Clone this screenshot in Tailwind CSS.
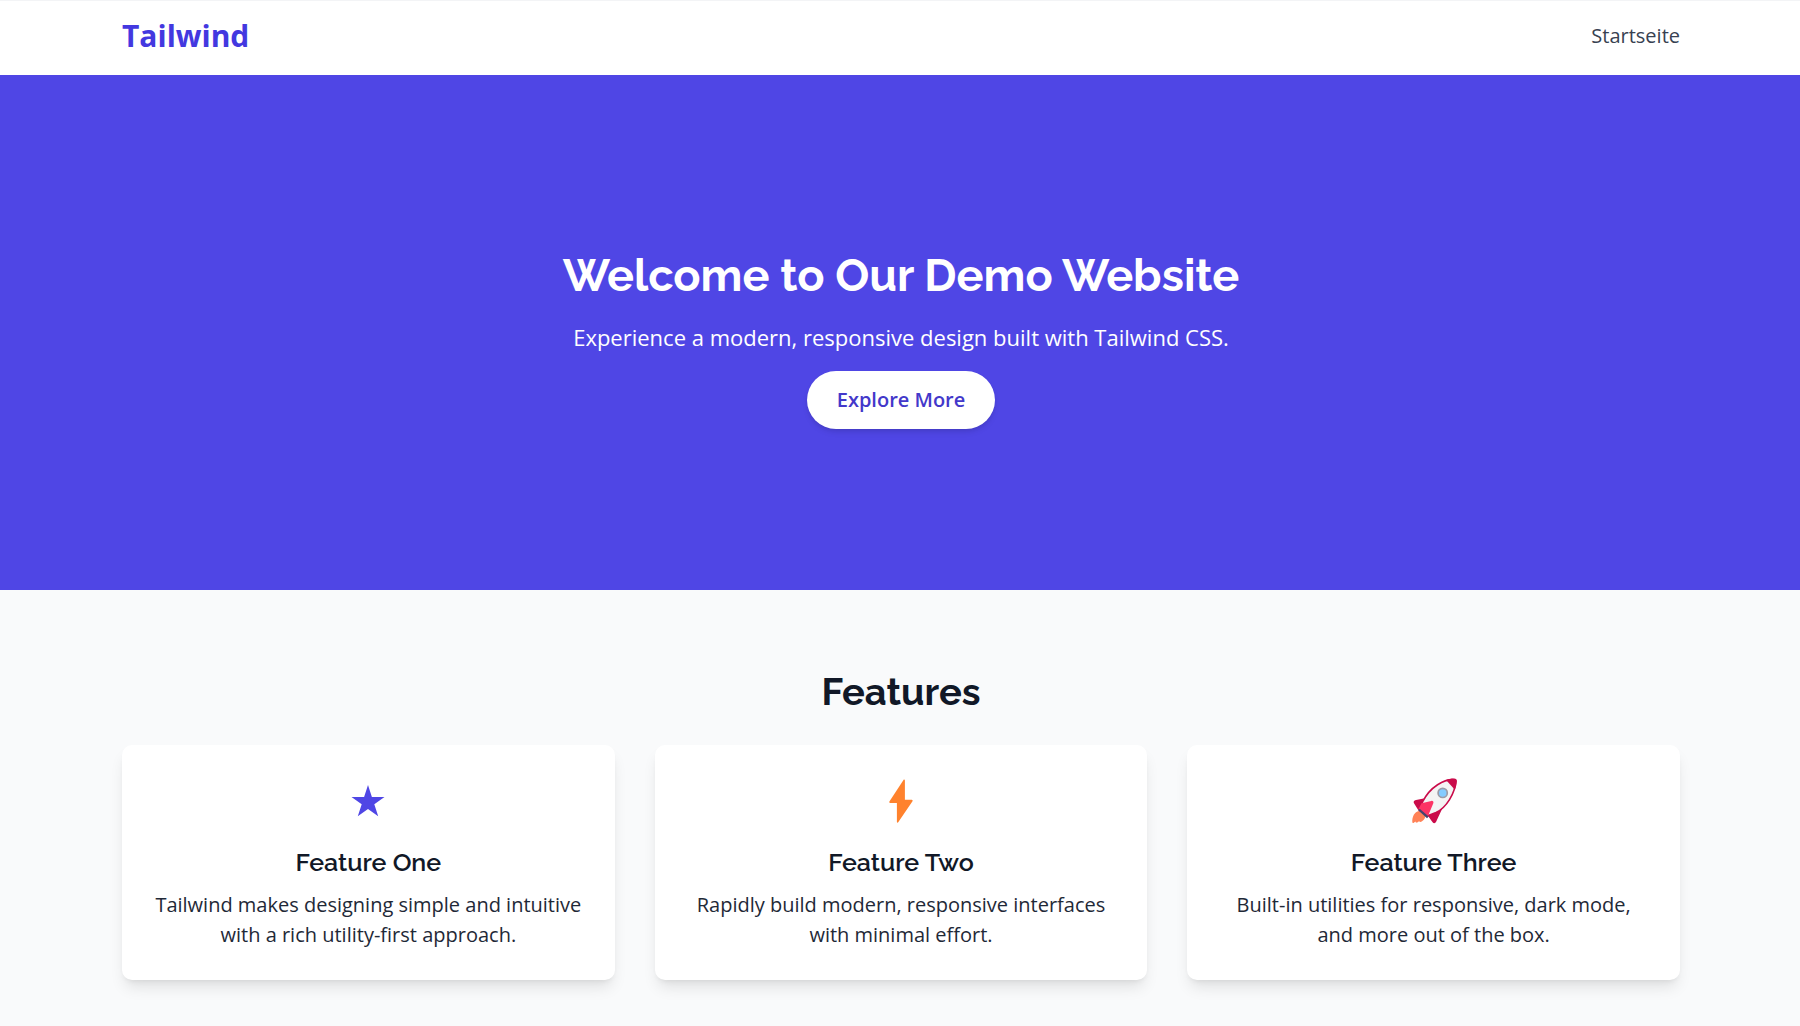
<!DOCTYPE html>
<html lang="de">

<head>
    <meta charset="UTF-8">
    <meta name="viewport" content="width=device-width, initial-scale=1.0">
    <title>Tailwind</title>
    <script src="https://cdn.jsdelivr.net/npm/@tailwindcss/browser@4"></script>
</head>

<body class="bg-[#f9fafb] text-[#1f2937] text-[20px] leading-[30px] font-['Open_Sans',sans-serif]">
    <!-- Navigation -->
    <header class="bg-white border-t border-gray-100">
        <div class="pl-[122px] pr-[120px] max-md:px-6 h-[74px] pb-[5px] flex items-center justify-between">
            <a href="#" class="text-[30px] leading-[40px] font-bold text-[#4338e0]">Tailwind</a>
            <nav>
                <a href="#" class="text-[#374151] hover:text-[#4f46e5]">Startseite</a>
            </nav>
        </div>
    </header>

    <!-- Hero -->
    <section class="bg-[#4f46e5] text-white text-center pl-[122px] pr-[120px] max-md:px-6 pt-[174px] pb-[161px]">
        <h1 class="text-[45px] leading-[54px] font-bold font-[Raleway,'Open_Sans',sans-serif] mb-[18px]">Welcome to Our Demo Website</h1>
        <p class="text-[22px] leading-[32px] mb-[18px]">Experience a modern, responsive design built with Tailwind CSS.</p>
        <button class="bg-white text-[#4338ca] font-semibold px-[30px] py-[14px] rounded-full shadow-md">Explore More</button>
    </section>

    <!-- Features -->
    <section class="pl-[122px] pr-[120px] max-md:px-6 pt-[79px] pb-[78px]">
        <h2 class="text-[38px] leading-[46px] font-bold font-[Raleway,'Open_Sans',sans-serif] text-[#111827] text-center mb-[30px]">Features</h2>
        <div class="grid grid-cols-1 md:grid-cols-3 gap-10">
            <div class="bg-white rounded-[10px] shadow-lg p-[30px] text-center">
                <svg class="size-[50px] mx-auto mb-5 text-[#4f46e5]" viewBox="0 0 50 50" fill="currentColor" aria-hidden="true">
                    <path d="M25 10l3.900 11.900h12.600l-10.200 7.400 3.900 12-10.200-7.400-10.200 7.400 3.900-12-10.200-7.400h12.600z" />
                </svg>
                <h3 class="text-[25px] leading-[34px] font-semibold font-[Raleway,'Open_Sans',sans-serif] text-[#111827] mb-[11px]">Feature One</h3>
                <p>Tailwind makes designing simple and intuitive with a rich utility-first approach.</p>
            </div>
            <div class="bg-white rounded-[10px] shadow-lg p-[30px] text-center">
                <svg class="size-[50px] mx-auto mb-5 text-[#ff822d]" viewBox="0 0 50 50" fill="currentColor" aria-hidden="true">
                    <path d="M27.500 5c.4-.8 1.400-.5 1.400.4v19.400h6.800c.9 0 1.200.9.800 1.500l-14.300 21c-.5.700-1.300.4-1.300-.4v-18.800h-6.700c-.8 0-1.200-.8-.8-1.500z" />
                </svg>
                <h3 class="text-[25px] leading-[34px] font-semibold font-[Raleway,'Open_Sans',sans-serif] text-[#111827] mb-[11px]">Feature Two</h3>
                <p>Rapidly build modern, responsive interfaces with minimal effort.</p>
            </div>
            <div class="bg-white rounded-[10px] shadow-lg p-[30px] text-center">
                <svg class="size-[50px] mx-auto mb-5" viewBox="-1 -1 50 50" aria-hidden="true">
                    <path fill="#ff8257" d="M9 35c-4.500 1-7 5.500-6.700 11.300.1.800.9 1 1.500.5l1.700-1.300c.2 1.300 1.300 1.500 2.200.8l1.300-1c.8 1 2 .8 2.700.3 2.500-1.700 3.500-3.600 3.600-5.600z" />
                    <path fill="#ca0b4a" d="M15 22.300l-9 1.800c-2.200.5-2.800 1.800-2 3.200l4.500 7.200zM32.500 32l-6.500 14c-.7 1.500-2.500 1.500-3.400.2l-5.100-6.900z" />
                    <path fill="#f4f4f4" stroke="#ca0b4a" stroke-width="1.600" d="M44.500 3.700c-10-1-24.500 7-32 22.300l-3 8.500 7.500 5.500 9-3.500c10-4.500 19.500-19.500 19.600-31.500 0-.8-.4-1.200-1.100-1.300z" />
                    <path fill="#ca0b4a" d="M36 4c3.500-1.300 7-1.800 9.200-1.300 1.300.3 1.800 1.400 1.700 2.800-.2 2.500-.8 5.300-2 8.300z" />
                    <path fill="#fc3465" d="M8.500 33l3-5.800 9.800-2.300c1.600-.3 2.500.8 2 2.300l-5.800 14z" />
                    <path fill="#45446e" d="M8.200 34.200l1.500-1.500 9 7.700-1.700 1.900z" />
                    <circle cx="32.700" cy="16.900" r="4.600" fill="#83cbff" stroke="#9b9ba6" stroke-width="1.700" />
                </svg>
                <h3 class="text-[25px] leading-[34px] font-semibold font-[Raleway,'Open_Sans',sans-serif] text-[#111827] mb-[11px]">Feature Three</h3>
                <p>Built-in utilities for responsive, dark mode, and more out of the box.</p>
            </div>
        </div>
    </section>
</body>

</html>
